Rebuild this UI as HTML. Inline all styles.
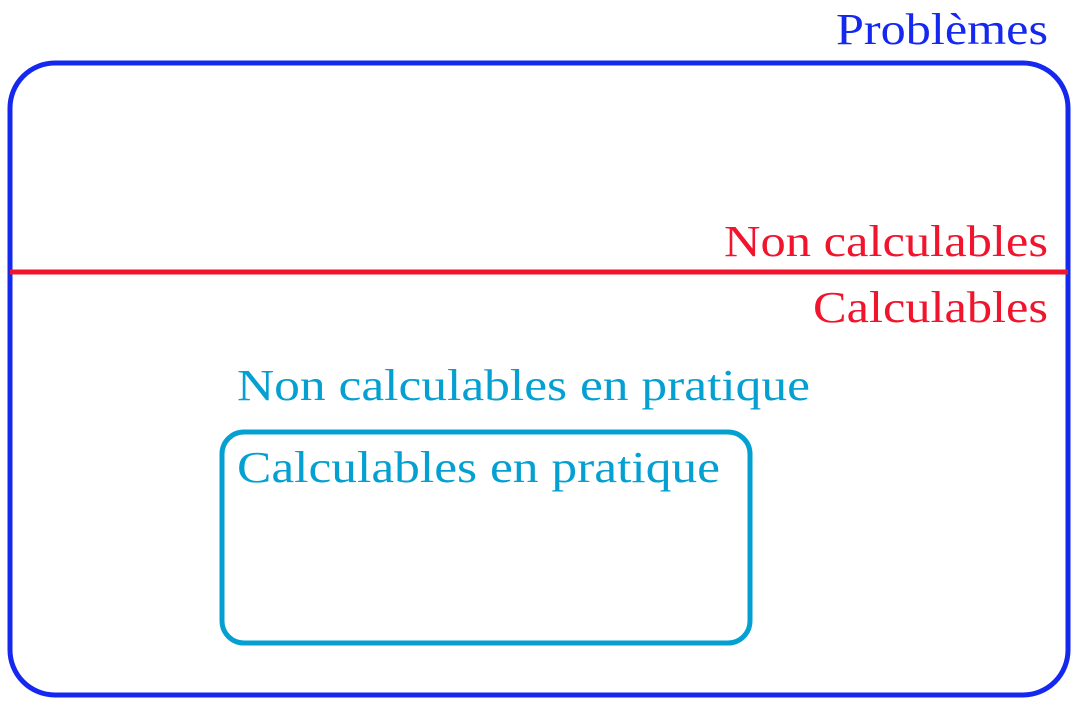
<!DOCTYPE html>
<html><head><meta charset="utf-8"><style>html,body{margin:0;padding:0;background:#fff;}svg{display:block}</style></head>
<body>
<svg width="1078" height="712" viewBox="0 0 1078 712" xmlns="http://www.w3.org/2000/svg" font-family="'Liberation Serif', serif" font-size="44">
<rect x="10" y="63" width="1058" height="632" rx="45" ry="45" fill="none" stroke="#1428f0" stroke-width="5"/>
<line x1="10" y1="272" x2="1068" y2="272" stroke="#f0142d" stroke-width="5"/>
<rect x="222" y="432" width="528" height="211" rx="22" ry="22" fill="none" stroke="#05a0d2" stroke-width="5"/>
<text x="836" y="44" fill="#1428f0" textLength="212" lengthAdjust="spacingAndGlyphs">Problèmes</text>
<text x="724" y="256" fill="#f0142d" textLength="324" lengthAdjust="spacingAndGlyphs">Non calculables</text>
<text x="813" y="322" fill="#f0142d" textLength="235" lengthAdjust="spacingAndGlyphs">Calculables</text>
<text x="237" y="400" fill="#05a0d2" textLength="573" lengthAdjust="spacingAndGlyphs">Non calculables en pratique</text>
<text x="237" y="482" fill="#05a0d2" textLength="483" lengthAdjust="spacingAndGlyphs">Calculables en pratique</text>
</svg>
</body></html>
